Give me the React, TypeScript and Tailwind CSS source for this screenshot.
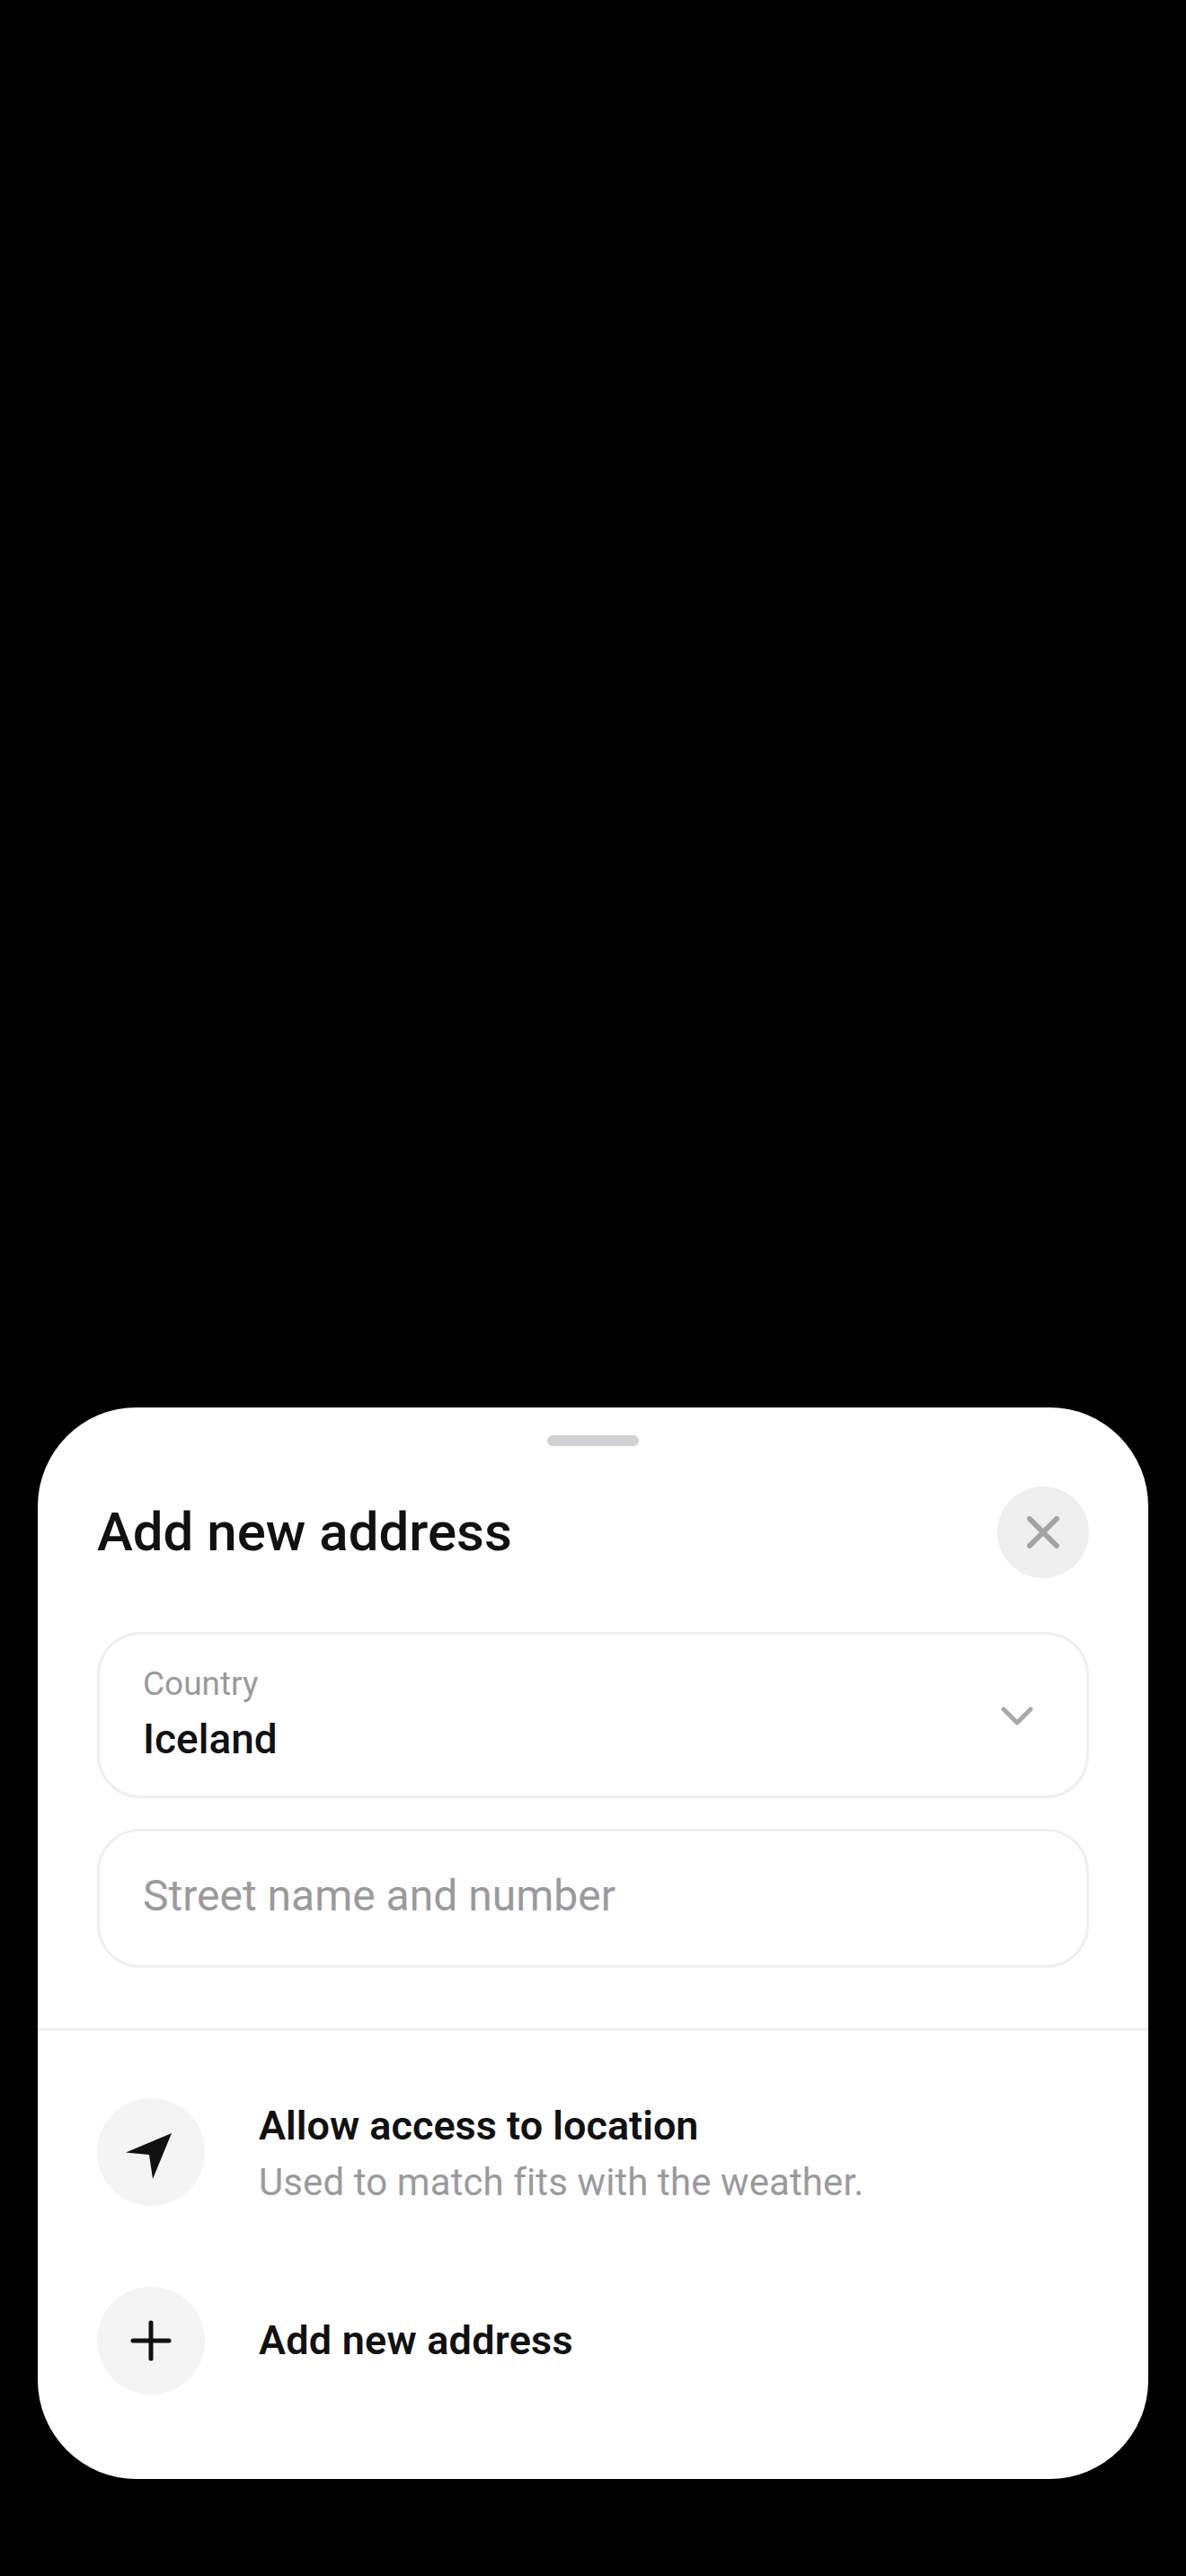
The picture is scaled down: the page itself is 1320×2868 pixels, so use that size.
const App = () => {
  return (
    <div className="flex h-[2868px] w-[1320px] flex-col justify-end bg-black px-[42px] pb-[108px] font-['Roboto',sans-serif]">
      <div className="h-[1193px] w-[1236px] rounded-[110px] bg-white">
        <div className="flex justify-center pt-[31px]">
          <div className="h-[12px] w-[102px] rounded-full bg-[#d1d1d6]" />
        </div>

        <div className="mt-[45px] flex items-center justify-between px-[66px]">
          <h1 className="text-[60px] leading-[102px] font-medium text-[#111111]">Add new address</h1>
          <button className="flex h-[102px] w-[102px] items-center justify-center rounded-full bg-[#efefef]">
            <svg width="36" height="36" viewBox="0 0 36 36" fill="none" stroke="#a3a3a3" strokeWidth="6" strokeLinecap="round">
              <path d="M3 3L33 33M33 3L3 33" />
            </svg>
          </button>
        </div>

        <div className="mt-[60px] flex flex-col gap-[34px] px-[66px]">
          <div className="flex h-[185px] items-center justify-between rounded-[48px] border-[3px] border-[#efefef] pr-[59px] pl-[48px]">
            <div className="pb-[2px]">
              <div className="text-[37px] leading-[50px] text-[#9a9a9e]">Country</div>
              <div className="mt-[5px] text-[46px] leading-[62px] font-medium text-[#111111]">Iceland</div>
            </div>
            <svg className="mt-[2px]" width="36" height="22" viewBox="0 0 36 22" fill="none" stroke="#a9a9a9" strokeWidth="5" strokeLinecap="round" strokeLinejoin="round">
              <path d="M3 3L18 18L33 3" />
            </svg>
          </div>
          <div className="flex h-[155px] items-center rounded-[48px] border-[3px] border-[#efefef] pb-[6px] pl-[48px]">
            <div className="text-[48px] leading-[62px] text-[#9a9a9e]">Street name and number</div>
          </div>
        </div>

        <div className="mt-[67px] h-[3px] bg-[#efefef]" />

        <div className="mt-[75px] flex flex-col gap-[90px] px-[66px]">
          <div className="flex items-center gap-[60px]">
            <div className="flex h-[120px] w-[120px] items-center justify-center rounded-full bg-[#f4f4f4]">
              <svg width="60" height="60" viewBox="0 0 60 60" fill="#111111">
                <path d="M53 9L32 60L28 33L2 30.5Z" />
              </svg>
            </div>
            <div>
              <div className="text-[45px] leading-[62px] font-semibold text-[#111111]">Allow access to location</div>
              <div className="mt-[6px] text-[42px] leading-[52px] tracking-[0.1px] text-[#9a9a9e]">Used to match fits with the weather.</div>
            </div>
          </div>
          <div className="flex items-center gap-[60px]">
            <div className="flex h-[120px] w-[120px] items-center justify-center rounded-full bg-[#f4f4f4]">
              <svg width="46" height="46" viewBox="0 0 46 46" fill="none" stroke="#111111" strokeWidth="5" strokeLinecap="round">
                <path d="M23 3V43M3 23H43" />
              </svg>
            </div>
            <div className="text-[45px] leading-[60px] font-semibold tracking-[0.2px] text-[#111111]">Add new address</div>
          </div>
        </div>
      </div>
    </div>
  );
};

export default App;
